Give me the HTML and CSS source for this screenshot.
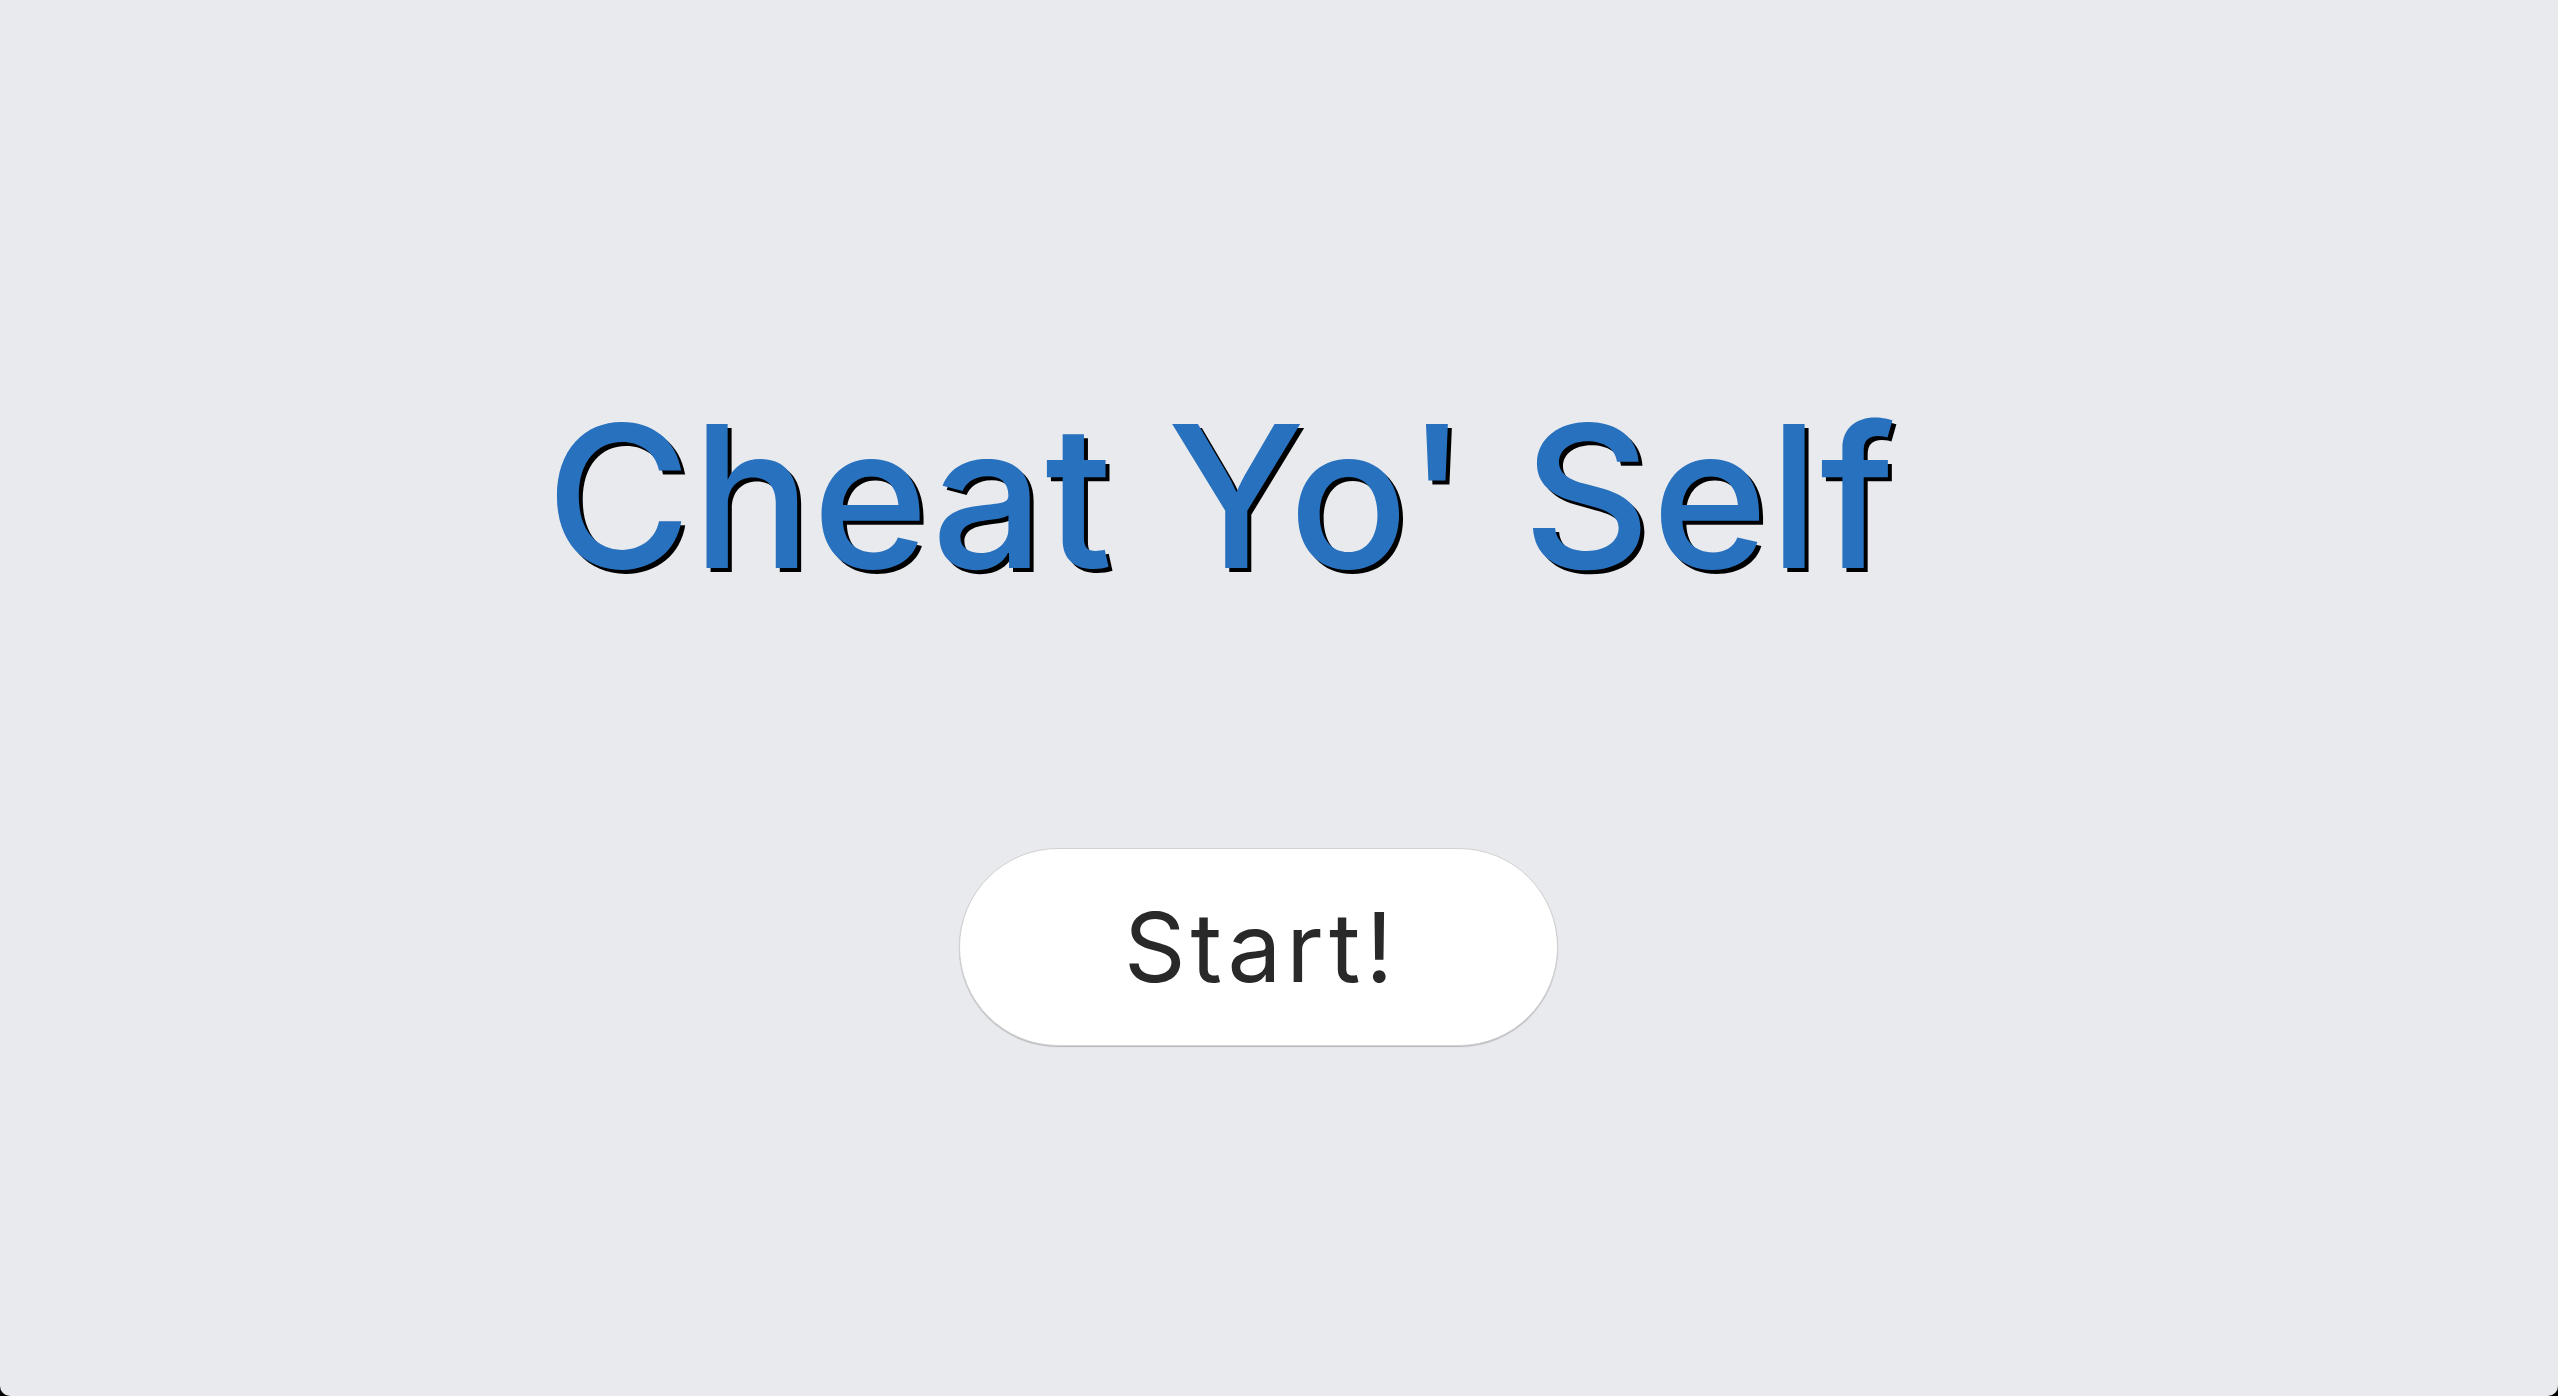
FILE: index.html
```html
<!DOCTYPE html>
<html lang="en">
<head>
<meta charset="utf-8">
<title>Cheat Yo' Self</title>
<link rel="stylesheet" href="styles.css">
</head>
<body>
<main class="page">
  <h1 class="title">Cheat Yo' Self</h1>
  <button class="start-btn" type="button">Start!</button>
</main>
</body>
</html>
```
FILE: styles.css
```css
html, body {
  margin: 0;
  padding: 0;
  background: #000;
}
.page {
  box-sizing: border-box;
  height: 1396px;
  background: #e9eaee;
  border-radius: 0 0 10px 10px;
  display: flex;
  flex-direction: column;
  align-items: center;
  padding-top: 397px;
  font-family: "Inter", "Noto Sans", sans-serif;
}
.title {
  margin: 0 116px 0 0;
  font-size: 198px;
  line-height: 1;
  font-weight: 500;
  letter-spacing: 1px;
  color: #2771be;
  text-shadow: 4px 4px 0 #000;
  white-space: nowrap;
}
.start-btn {
  margin: 253px 41px 0 0;
  box-sizing: border-box;
  width: 599px;
  height: 198px;
  border-radius: 99px;
  border: 1px solid #d2d2d2;
  box-shadow: 0 1px 1px rgba(0,0,0,0.22);
  background: #fff;
  color: #292929;
  font-family: "Inter", "Noto Sans", sans-serif;
  font-size: 96px;
  line-height: 1;
  font-weight: 400;
  letter-spacing: 5px;
  display: flex;
  align-items: center;
  justify-content: center;
  padding: 0 0 0 5px;
}
```
